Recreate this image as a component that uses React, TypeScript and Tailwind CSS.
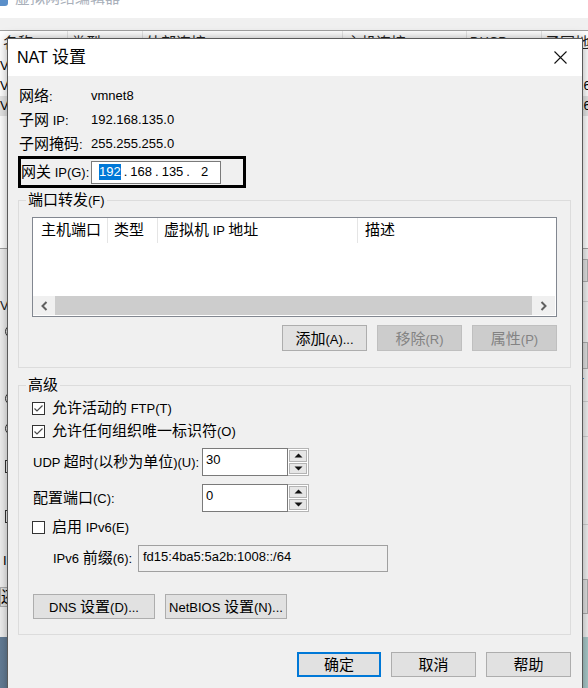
import React from "react";

// split a label into CJK / latin runs so the Chinese glyphs get the wider size
function T({ s, big }: { s: string; big?: boolean }) {
  return (
    <span className="whitespace-pre">
      {s.split(/([\u4e00-\u9fff]+)/).map((p, i) =>
        /[\u4e00-\u9fff]/.test(p) ? (
          <span key={i} className={big ? "text-[17px]" : "text-[15px]"}>
            {p}
          </span>
        ) : (
          <React.Fragment key={i}>{p}</React.Fragment>
        )
      )}
    </span>
  );
}

function Btn({
  label,
  className,
  disabled,
  primary,
}: {
  label: string;
  className: string;
  disabled?: boolean;
  primary?: boolean;
}) {
  const tone = disabled
    ? "bg-[#cccccc] border border-[#bfbfbf] text-[#838383]"
    : primary
    ? "bg-[#e1e1e1] border-2 border-[#0078d7] text-black"
    : "bg-[#e1e1e1] border border-[#adadad] text-black";
  return (
    <div className={`flex items-center justify-center leading-none ${tone} ${className}`}>
      <T s={label} />
    </div>
  );
}

function Check({ checked }: { checked?: boolean }) {
  return (
    <div className="w-[13px] h-[13px] border border-[#333333] bg-white shrink-0">
      {checked && (
        <svg width="11" height="11" viewBox="0 0 11 11">
          <polyline points="1.5,5.5 4,8 9.5,2.5" fill="none" stroke="#4a4a4a" strokeWidth="1.2" />
        </svg>
      )}
    </div>
  );
}

function Arrow({ up }: { up?: boolean }) {
  return (
    <svg width="9" height="5" viewBox="0 0 9 5">
      <polygon points={up ? "0.5,4.5 4.5,0.5 8.5,4.5" : "0.5,0.5 4.5,4.5 8.5,0.5"} fill="#111" />
    </svg>
  );
}

function Spin({ value }: { value: string }) {
  return (
    <div className="flex h-[28px]">
      <div className="w-[86px] h-full border border-[#7a7a7a] bg-white pl-[3px] pt-[3px] leading-[16px]">
        {value}
      </div>
      <div className="w-[21px] h-full border border-l-0 border-[#b4b4b4] bg-white flex flex-col gap-[1px] p-[1px]">
        <div className="flex-1 bg-[#e6e6e6] border border-[#b4b4b4] flex items-center justify-center">
          <Arrow up />
        </div>
        <div className="flex-1 bg-[#e6e6e6] border border-[#b4b4b4] flex items-center justify-center">
          <Arrow />
        </div>
      </div>
    </div>
  );
}

function Chevron({ right }: { right?: boolean }) {
  return (
    <svg width="7" height="10" viewBox="0 0 7 10">
      <polyline
        points={right ? "1.5,1 5.5,5 1.5,9" : "5.5,1 1.5,5 5.5,9"}
        fill="none"
        stroke="#606060"
        strokeWidth="2"
      />
    </svg>
  );
}

function InfoRow({ label, value }: { label: string; value: string }) {
  return (
    <div className="flex items-center h-[24px] pl-[11px]">
      <div className="w-[72px]">
        <T s={label} />
      </div>
      <div>{value}</div>
    </div>
  );
}

function BackgroundWindow() {
  const cols = [
    { w: "w-[68px]", t: "名称" },
    { w: "w-[75px]", t: "类型" },
    { w: "w-[200px]", t: "外部连接" },
    { w: "w-[124px]", t: "主机连接" },
    { w: "w-[75px]", t: "DHCP" },
    { w: "w-[60px]", t: "子网地址" },
  ];
  const rows = [
    { n: "VMnet0", s: "-", sel: false },
    { n: "VMnet1", s: "192.168.56.0", sel: false },
    { n: "VMnet8", s: "192.168.135.0", sel: true },
  ];
  return (
    <div className="flex flex-col h-full">
      <div className="h-[18px] bg-white overflow-hidden flex">
        <div className="w-[8px] h-[6px] bg-[#5b8fc9] rounded-br-[3px]" />
        <div className="ml-[7px] -mt-[12px] leading-[20px] text-[#a9b0ba]">
          <span className="text-[15px]">虚拟网络编辑器</span>
        </div>
      </div>
      <div className="h-[12px] bg-[#f0f0f0]" />
      <div className="h-[219px] border-t border-b border-[#a0a0a0] bg-white flex flex-col">
        <div className="h-[25px] flex">
          {cols.map((c) => (
            <div key={c.t} className={`${c.w} shrink-0 h-full border-r border-[#e5e5e5] pl-[3px] pt-[1px] text-[#222]`}>
              <T s={c.t} />
            </div>
          ))}
        </div>
        {rows.map((r) => (
          <div key={r.n} className={`h-[20px] flex items-center ${r.sel ? "bg-[#e5e5e5]" : ""}`}>
            <div className="w-[542px] shrink-0">{r.n}</div>
            <div className="pl-[9px] whitespace-nowrap">{r.s}</div>
          </div>
        ))}
      </div>
      <div className="flex-1 flex justify-between">
        <div className="flex flex-col">
          <div className="mt-[45px] text-[#1a1a1a] whitespace-nowrap">
            <T s="VMnet 信息" />
          </div>
          <div className="mt-[8px] ml-[5px] w-[13px] h-[13px] rounded-full border border-[#333]" />
          <div className="mt-[54px] ml-[5px] w-[13px] h-[13px] rounded-full border border-[#333]" />
          <div className="mt-[17px] ml-[5px] w-[13px] h-[13px] rounded-full border border-[#333]" />
          <div className="mt-[25px] ml-[5px] w-[13px] h-[13px] border border-[#333]" />
          <div className="mt-[37px] ml-[5px] w-[13px] h-[13px] border border-[#333]" />
          <div className="mt-[28px] ml-[3px]">I</div>
          <div className="mt-[17px] w-[96px] h-[20px] border border-[#adadad] bg-[#e1e1e1] flex items-center whitespace-nowrap">
            <T s="还原默认设置" />
          </div>
        </div>
        <div className="flex flex-col w-[20px]">
          <div className="mt-[10px] h-[23px] bg-[#e1e1e1] border border-[#adadad]" />
          <div className="mt-[19px] border-t border-[#d0d0d0]" />
          <div className="mt-[40px] h-[27px] bg-[#e1e1e1] border border-[#adadad]" />
          <div className="mt-[4px]">AT</div>
          <div className="mt-[8px] border-t border-[#d0d0d0]" />
          <div className="mt-[34px] border-t border-[#d0d0d0]" />
          <div className="mt-[62px]">IO</div>
          <div className="mt-[6px] border-t border-[#d0d0d0]" />
          <div className="mt-[54px] h-[35px] bg-[#e1e1e1] border border-[#adadad]" />
        </div>
      </div>
      <div className="h-[51px] bg-gradient-to-r from-[#647d96] to-[#a9c9c9]" />
    </div>
  );
}

function NatDialog() {
  return (
    <div className="absolute left-[7px] top-[38px] w-[576px] h-[660px] border border-[#5a5a5a] bg-[#f0f0f0] shadow-[0_0_10px_rgba(0,0,0,0.35)]">
      <div className="h-[37px] bg-white flex items-center justify-between pl-[9px] pr-[15px]">
        <div className="text-[16px]">
          <T s="NAT 设置" big />
        </div>
        <svg width="13" height="13" viewBox="0 0 13 13">
          <path d="M0.5 0.5 L12.5 12.5 M12.5 0.5 L0.5 12.5" stroke="#111" strokeWidth="1.1" />
        </svg>
      </div>

      <div className="pt-[8px]">
        <InfoRow label="网络:" value="vmnet8" />
        <InfoRow label="子网 IP:" value="192.168.135.0" />
        <InfoRow label="子网掩码:" value="255.255.255.0" />

        <div className="ml-[10px] w-[228px] h-[32px] border-[3px] border-black flex items-center">
          <div className="w-[70px]">
            <T s="网关 IP(G):" />
          </div>
          <div className="w-[130px] h-[23px] border border-[#7a7a7a] bg-white flex items-center pl-[7px]">
            <span className="bg-[#0078d7] text-white leading-[16px]">192</span>
            <span className="ml-[3px]">.</span>
            <span className="ml-[3px]">168</span>
            <span className="ml-[3px]">.</span>
            <span className="ml-[3px]">135</span>
            <span className="ml-[3px]">.</span>
            <span className="ml-[11px]">2</span>
          </div>
        </div>

        <fieldset className="ml-[10px] mt-[3px] w-[553px] border border-[#dcdcdc] px-[13px] pt-[7px] pb-[16px]">
          <legend className="-ml-[6px] px-[2px] leading-[18px]">
            <T s="端口转发(F)" />
          </legend>
          <div className="h-[100px] border border-[#828790] bg-white flex flex-col">
            <div className="h-[25px] flex shrink-0">
              <div className="w-[75px] h-full border-r border-[#e5e5e5] pl-[8px] flex items-center">
                <T s="主机端口" />
              </div>
              <div className="w-[50px] h-full border-r border-[#e5e5e5] pl-[6px] flex items-center">
                <T s="类型" />
              </div>
              <div className="w-[200px] h-full border-r border-[#e5e5e5] pl-[6px] flex items-center">
                <T s="虚拟机 IP 地址" />
              </div>
              <div className="pl-[7px] flex items-center">
                <T s="描述" />
              </div>
            </div>
            <div className="flex-1" />
            <div className="h-[19px] flex mb-[1px] mr-[1px] shrink-0">
              <div className="w-[22px] bg-[#f0f0f0] flex items-center justify-center">
                <Chevron />
              </div>
              <div className="flex-1 bg-[#cdcdcd]" />
              <div className="w-[23px] bg-[#f0f0f0] flex items-center justify-center">
                <Chevron right />
              </div>
            </div>
          </div>
          <div className="mt-[8px] flex justify-end gap-[10px]">
            <Btn label="添加(A)..." className="w-[85px] h-[26px]" />
            <Btn label="移除(R)" className="w-[85px] h-[26px]" disabled />
            <Btn label="属性(P)" className="w-[85px] h-[26px]" disabled />
          </div>
        </fieldset>

        <fieldset className="ml-[10px] mt-[8px] w-[553px] border border-[#dcdcdc] px-[13px] pt-[2px] pb-[15px]">
          <legend className="-ml-[6px] px-[2px] leading-[18px]">
            <T s="高级" />
          </legend>
          <div className="h-[23px] flex items-center gap-[7px]">
            <Check checked />
            <T s="允许活动的 FTP(T)" />
          </div>
          <div className="h-[23px] flex items-center gap-[7px]">
            <Check checked />
            <T s="允许任何组织唯一标识符(O)" />
          </div>
          <div className="mt-[5px] flex items-center">
            <div className="w-[170px] pl-[1px]">
              <T s="UDP 超时(以秒为单位)(U):" />
            </div>
            <Spin value="30" />
          </div>
          <div className="mt-[8px] flex items-center">
            <div className="w-[170px] pl-[1px]">
              <T s="配置端口(C):" />
            </div>
            <Spin value="0" />
          </div>
          <div className="mt-[5px] h-[20px] flex items-center gap-[7px]">
            <Check />
            <T s="启用 IPv6(E)" />
          </div>
          <div className="mt-[8px] pl-[21px] flex items-center">
            <div className="w-[85px]">
              <T s="IPv6 前缀(6):" />
            </div>
            <div className="w-[250px] h-[27px] border border-[#a0a0a0] bg-[#f0f0f0] pl-[4px] pt-[3px] leading-[16px]">
              fd15:4ba5:5a2b:1008::/64
            </div>
          </div>
          <div className="mt-[22px] pl-[1px] flex gap-[10px]">
            <Btn label="DNS 设置(D)..." className="w-[122px] h-[25px]" />
            <Btn label="NetBIOS 设置(N)..." className="w-[122px] h-[25px]" />
          </div>
        </fieldset>

        <div className="mt-[17px] pr-[11px] flex justify-end gap-[10px]">
          <Btn label="确定" className="w-[84px] h-[25px]" primary />
          <Btn label="取消" className="w-[85px] h-[25px]" />
          <Btn label="帮助" className="w-[85px] h-[25px]" />
        </div>
      </div>
    </div>
  );
}

export default function App() {
  return (
    <div className="relative w-[588px] h-[688px] overflow-hidden bg-[#f0f0f0] text-[13px] text-black font-['Liberation_Sans','Noto_Sans_CJK_SC',sans-serif]">
      <BackgroundWindow />
      <NatDialog />
    </div>
  );
}
